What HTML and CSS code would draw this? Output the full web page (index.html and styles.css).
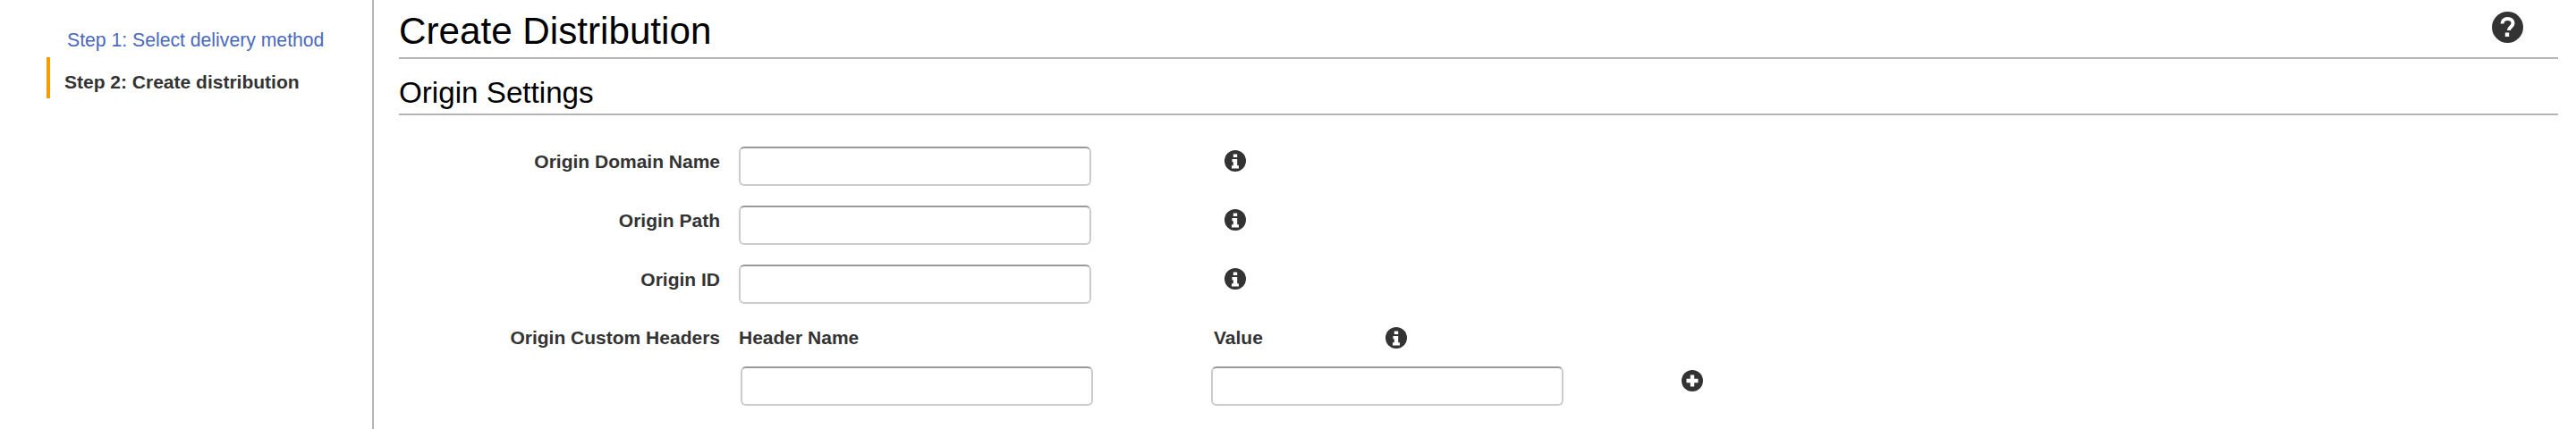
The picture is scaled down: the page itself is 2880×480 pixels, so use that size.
FILE: index.html
```html
<!DOCTYPE html>
<html lang="en">
<head>
<meta charset="utf-8">
<title>Create Distribution</title>
<link rel="stylesheet" href="styles.css">
</head>
<body>
<div class="page">
  <nav class="sidebar">
    <a class="step-link" href="#">Step 1: Select delivery method</a>
    <div class="step-current">Step 2: Create distribution</div>
  </nav>
  <main class="main">
    <header class="title-bar">
      <h1>Create Distribution</h1>
      <svg class="help" viewBox="0 0 35 35" aria-label="Help">
        <circle cx="17.5" cy="17.5" r="17.5" fill="#333"/>
        <path d="M11.5 13.5c0-3.6 2.6-5.5 6-5.5 3.500 0 6 1.900 6 5 0 4-4.500 4.200-4.500 7.500v.5" fill="none" stroke="#fff" stroke-width="4"/>
        <rect x="14.800" y="23.500" width="4.400" height="4.500" fill="#fff"/>
      </svg>
    </header>
    <h2>Origin Settings</h2>
    <form class="form">
      <div class="row">
        <label class="label">Origin Domain Name</label>
        <input class="field" type="text">
        <svg class="icon info-gap" viewBox="0 0 24 24"><circle cx="12" cy="12" r="12" fill="#333"/><path d="M9.800 4.500h4.400v3.500H9.800zM8.500 10h5.700v7.200h1.800v3.300H8v-3.300h1.800v-4H8.500z" fill="#fff"/></svg>
      </div>
      <div class="row">
        <label class="label">Origin Path</label>
        <input class="field" type="text">
        <svg class="icon info-gap" viewBox="0 0 24 24"><circle cx="12" cy="12" r="12" fill="#333"/><path d="M9.800 4.500h4.400v3.500H9.800zM8.500 10h5.700v7.200h1.800v3.300H8v-3.300h1.800v-4H8.500z" fill="#fff"/></svg>
      </div>
      <div class="row">
        <label class="label">Origin ID</label>
        <input class="field" type="text">
        <svg class="icon info-gap" viewBox="0 0 24 24"><circle cx="12" cy="12" r="12" fill="#333"/><path d="M9.800 4.500h4.400v3.500H9.800zM8.500 10h5.700v7.200h1.800v3.300H8v-3.300h1.800v-4H8.500z" fill="#fff"/></svg>
      </div>
      <div class="row row-head">
        <label class="label">Origin Custom Headers</label>
        <span class="col-name">Header Name</span>
        <span class="col-value">Value</span>
        <svg class="icon" viewBox="0 0 24 24"><circle cx="12" cy="12" r="12" fill="#333"/><path d="M9.800 4.500h4.400v3.500H9.800zM8.500 10h5.700v7.200h1.800v3.300H8v-3.300h1.800v-4H8.500z" fill="#fff"/></svg>
      </div>
      <div class="row row-inputs">
        <input class="field" type="text">
        <input class="field field-value" type="text">
        <svg class="icon plus" viewBox="0 0 24 24"><circle cx="12" cy="12" r="12" fill="#333"/><path d="M9.800 5.500h4.400v4.300h4.300v4.400h-4.300v4.300H9.800v-4.300H5.500V9.800h4.300z" fill="#fff"/></svg>
      </div>
    </form>
  </main>
</div>
</body>
</html>
```
FILE: styles.css
```css
* { box-sizing: border-box; }
html, body { margin: 0; padding: 0; background: #fff; }
body { font-family: "Liberation Sans", Arial, sans-serif; color: #333; }
.page { display: flex; height: 480px; overflow: hidden; }
.sidebar {
  width: 418px;
  flex: none;
  border-right: 2px solid #b5b5b5;
  padding-top: 28px;
  padding-left: 52px;
}
.step-link {
  display: block;
  height: 36px;
  padding-left: 23px;
  font-size: 21.2px;
  line-height: 34px;
  color: #4a69bd;
  text-decoration: none;
}
.step-current {
  height: 46px;
  border-left: 4px solid #ff9900;
  padding-left: 16px;
  font-size: 21px;
  line-height: 56px;
  font-weight: bold;
}
.main { flex: 1; padding: 0 20px 0 28px; }
.title-bar {
  display: flex;
  justify-content: space-between;
  height: 66px;
  border-bottom: 2px solid #b5b5b5;
  padding: 13px 39px 0 0;
}
h1 {
  margin: -1px 0 0;
  font-size: 42.2px;
  line-height: 46px;
  font-weight: normal;
  color: #000;
}
.help { width: 35px; height: 35px; flex: none; }
h2 {
  margin: 0;
  height: 63px;
  border-bottom: 2px solid #b5b5b5;
  font-size: 33.2px;
  line-height: 76px;
  font-weight: normal;
  color: #000;
}
.form { padding-top: 35px; }
.row { display: flex; align-items: flex-start; height: 66px; }
.label {
  width: 359px;
  flex: none;
  margin-right: 21px;
  text-align: right;
  font-size: 21px;
  line-height: 34px;
  font-weight: bold;
}
.field {
  width: 394px;
  height: 44px;
  flex: none;
  margin: 0;
  padding: 0 8px;
  background: #fff;
  border: 2px solid #cccccc;
  border-top-color: #999;
  border-radius: 6px;
  outline: none;
}
.icon { width: 24px; height: 24px; flex: none; margin-top: 4px; }
.info-gap { margin-left: 149px; }
.row-head { height: 49px; margin-top: -1px; }
.col-name, .col-value { line-height: 34px; font-size: 21px; font-weight: bold; }
.col-name { width: 531px; flex: none; }
.col-value { width: 192px; flex: none; }
.row-head .icon { margin-top: 5px; }
.row-inputs { padding-left: 382px; }
.field-value { margin-left: 132px; }
.plus { margin-left: 132px; }
```
